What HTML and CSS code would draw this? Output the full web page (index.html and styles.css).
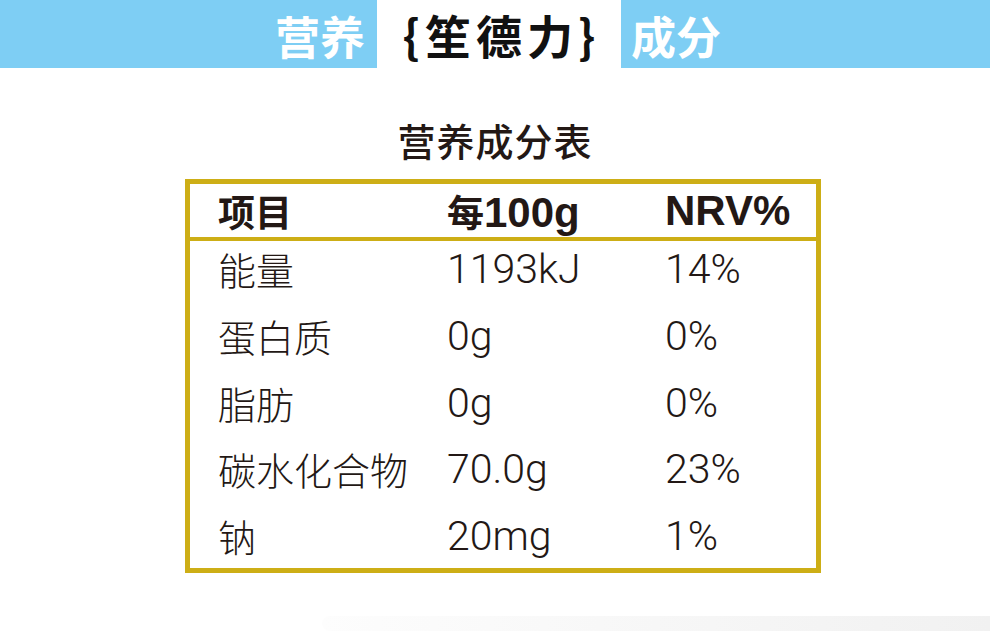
FILE: index.html
```html
<!DOCTYPE html>
<html lang="zh">

<head>
    <meta charset="UTF-8">
    <title>笙德力 营养成分</title>
    <link rel="stylesheet" href="styles.css">
</head>

<body>
    <div class="banner">
        <div class="banner-side left">营养</div>
        <div class="banner-brand">{笙德力}</div>
        <div class="banner-side right">成分</div>
    </div>

    <h1 class="title">营养成分表</h1>

    <div class="table">
        <div class="head">
            <span>项目</span>
            <span>每<span class="latin">100g</span></span>
            <span class="latin">NRV%</span>
        </div>
        <div class="rows">
            <div class="row"><span class="name">能量</span><span class="num">1193kJ</span><span class="num">14%</span></div>
            <div class="row"><span class="name">蛋白质</span><span class="num">0g</span><span class="num">0%</span></div>
            <div class="row"><span class="name">脂肪</span><span class="num">0g</span><span class="num">0%</span></div>
            <div class="row"><span class="name">碳水化合物</span><span class="num">70.0g</span><span class="num">23%</span></div>
            <div class="row"><span class="name">钠</span><span class="num">20mg</span><span class="num">1%</span></div>
        </div>
    </div>

    <div class="shadow"></div>
</body>

</html>
```

FILE: styles.css
```css
body {
    margin: 0;
    background: #fff;
    color: #231815;
    font-family: "Noto Sans CJK SC", "Liberation Sans", sans-serif;
    height: 631px;
    overflow: hidden;
    position: relative;
}

.banner {
    display: flex;
    height: 68px;
}

.banner-side {
    background: #7ecef4;
    color: #fff;
    font-size: 45px;
    font-weight: 700;
    line-height: 72px;
}

.banner-side.left {
    width: 365px;
    padding-right: 12px;
    text-align: right;
}

.banner-side.right {
    flex: 1;
    padding-left: 10px;
}

.banner-brand {
    box-sizing: border-box;
    width: 244px;
    padding-top: 1px;
    text-align: center;
    font-size: 46px;
    font-weight: 700;
    line-height: 66px;
    letter-spacing: 5px;
    text-indent: 5px;
    color: #111;
}

.title {
    margin: 46px 0 0;
    text-align: center;
    font-size: 38px;
    font-weight: 500;
    line-height: 52px;
    letter-spacing: 1px;
}

.table {
    box-sizing: border-box;
    width: 636px;
    height: 394px;
    margin: 13px 0 0 185px;
    border: 5px solid #cdae16;
}

.head,
.row {
    display: grid;
    grid-template-columns: 229px 218px 1fr;
    padding-left: 28px;
}

.head {
    height: 53px;
    border-bottom: 4px solid #cdae16;
    font-size: 37px;
    font-weight: 700;
    line-height: 54px;
}

.head .latin {
    font-family: "Liberation Sans", sans-serif;
    font-size: 42px;
    font-weight: 700;
}

.rows {
    margin-top: -4px;
}

.row {
    height: 66.75px;
    line-height: 64px;
}

.name {
    font-size: 38px;
    font-weight: 300;
}

.num {
    font-family: Roboto, "Liberation Sans", sans-serif;
    font-size: 41px;
    font-weight: 300;
}

.shadow {
    position: absolute;
    left: 322px;
    right: 0;
    top: 616px;
    height: 15px;
    border-radius: 8px 0 0 8px;
    background: linear-gradient(90deg, #fdfdfd, #f1f1f1);
}
```
